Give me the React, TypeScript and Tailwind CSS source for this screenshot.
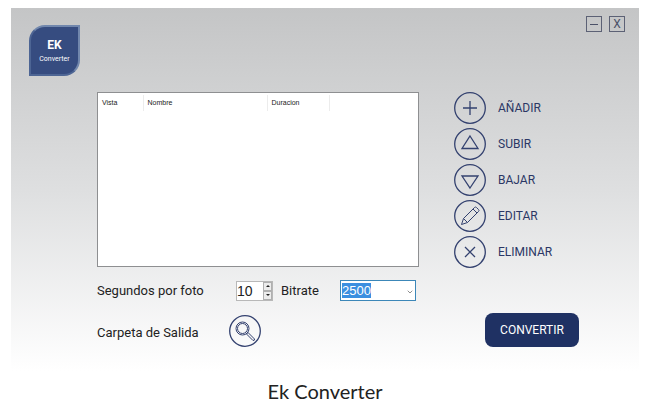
import type { ReactNode } from 'react';
import { ChevronDown } from 'lucide-react';

function AddIcon() {
  return <path d="M16 9v14M9 16h14" />;
}

function UpIcon() {
  return <path d="M16 8 24 20.500H8Z" />;
}

function DownIcon() {
  return <path d="M16 24 24 12H8Z" />;
}

function EditIcon() {
  return (
    <g strokeWidth="1">
      <path d="m7.500 24.500 2-6L20.500 7.500q1-1 2 0l2 2q1 1 0 2L13.500 22.500Z" />
      <path d="m9.500 18.500 4 4M19 9l4 4" />
    </g>
  );
}

function RemoveIcon() {
  return <path d="m11 11 10 10M21 11 11 21" />;
}

function SearchIcon() {
  return (
    <g strokeWidth="1">
      <circle cx="13.500" cy="13.500" r="6.500" />
      <circle cx="13.500" cy="13.500" r="5" />
      <path d="m17.500 19 1.500-1.500 6.500 6.500q.5 1.500-1.500 1.500Z" />
    </g>
  );
}

function CircleIcon({ children }: { children: ReactNode }) {
  return (
    <svg className="size-8 shrink-0" viewBox="0 0 32 32" fill="none" stroke="#33416f" strokeWidth="1.300" aria-hidden="true">
      <circle cx="16" cy="16" r="15.300" />
      {children}
    </svg>
  );
}

const actions = [
  { label: 'AÑADIR', icon: <AddIcon /> },
  { label: 'SUBIR', icon: <UpIcon /> },
  { label: 'BAJAR', icon: <DownIcon /> },
  { label: 'EDITAR', icon: <EditIcon /> },
  { label: 'ELIMINAR', icon: <RemoveIcon /> },
];

export default function App() {
  return (
    <figure className="bg-white pt-2 pr-[31px] pl-[11px] font-['Roboto',sans-serif]">
      <div className="bg-linear-to-b from-[#c4c5c6] via-[#dedfe0] via-50% to-white pb-6">
        {/* Title bar */}
        <header className="flex items-start justify-between pt-2 pr-[14px] pl-[18px]">
          <div className="mt-[9px] flex size-[51px] flex-col items-center justify-center gap-1 rounded-tl-2xl rounded-br-2xl border-2 border-[#7187ad] border-b-[#4d6594] border-l-[#4d6594] bg-[#364c80] text-white">
            <span className="text-xs leading-3 font-bold">EK</span>
            <span className="text-[7px] leading-2">Converter</span>
          </div>
          <div className="flex gap-[7px] text-[#4b5168]">
            <button aria-label="Minimizar" className="flex size-4 items-center justify-center border border-[#5c6175]">
              <span className="h-px w-2 bg-[#4b5168]" />
            </button>
            <button aria-label="Cerrar" className="flex size-4 items-center justify-center border border-[#5c6175] text-xs leading-3">
              X
            </button>
          </div>
        </header>

        {/* File list and actions */}
        <div className="mt-4 flex gap-[35px] pl-[86px]">
          <div className="h-[175px] flex-1 border border-[#8e8f91] bg-white pt-0.5">
            <table className="w-full table-fixed text-left font-['Liberation_Sans',sans-serif] text-[7px] leading-4 text-[#222]">
              <thead>
                <tr>
                  <th className="w-[45px] border-r border-[#ececec] pl-1 font-normal">Vista</th>
                  <th className="w-[124px] border-r border-[#ececec] pl-1 font-normal">Nombre</th>
                  <th className="w-[62px] border-r border-[#ececec] pl-1 font-normal">Duracion</th>
                  <td />
                </tr>
              </thead>
            </table>
          </div>
          <div className="flex w-[185px] flex-col items-start gap-1">
            {actions.map((action) => (
              <button key={action.label} className="flex items-center gap-3 text-xs leading-4 text-[#2b3765]">
                <CircleIcon>{action.icon}</CircleIcon>
                {action.label}
              </button>
            ))}
          </div>
        </div>

        {/* Settings */}
        <div className="mt-3 flex items-end justify-between pr-[60px] pl-[86px] text-[13px] leading-4 text-[#222]">
          <div>
            <div className="flex items-center">
              <label htmlFor="seconds" className="w-[139px]">Segundos por foto</label>
              <div className="flex h-5 w-[37px] border border-[#b8b8b8] bg-white">
                <input
                  id="seconds"
                  type="text"
                  inputMode="numeric"
                  defaultValue="10"
                  className="w-[26px] font-['Liberation_Sans',sans-serif] text-sm leading-4 outline-none"
                />
                <div className="flex flex-1 flex-col">
                  <button aria-label="Más" className="flex flex-1 items-center justify-center border border-[#b0b0b0] bg-[#ececec]">
                    <svg className="h-1 w-1" viewBox="0 0 4 4" aria-hidden="true"><path d="M0 3 2 1l2 2Z" fill="#222" /></svg>
                  </button>
                  <button aria-label="Menos" className="flex flex-1 items-center justify-center border border-[#b0b0b0] bg-[#ececec]">
                    <svg className="h-1 w-1" viewBox="0 0 4 4" aria-hidden="true"><path d="m0 1 2 2 2-2Z" fill="#222" /></svg>
                  </button>
                </div>
              </div>
              <label htmlFor="bitrate" className="ml-2 w-[59px]">Bitrate</label>
              <div className="relative">
                <select
                  id="bitrate"
                  defaultValue="2500"
                  className="block h-[21px] w-[76px] appearance-none border border-[#3c87b8] bg-white bg-[linear-gradient(#3b8fe0,#3b8fe0)] bg-[length:29px_15px] bg-[position:1px_2px] bg-no-repeat pl-px font-['Liberation_Sans',sans-serif] text-[13px] text-white outline-none"
                >
                  <option>2500</option>
                </select>
                <ChevronDown className="pointer-events-none absolute top-2 right-0.5 size-2 text-[#555]" />
              </div>
            </div>
            <div className="mt-[14px] flex items-center">
              <span className="w-[132px] pt-1">Carpeta de Salida</span>
              <button aria-label="Elegir carpeta de salida">
                <CircleIcon><SearchIcon /></CircleIcon>
              </button>
            </div>
          </div>
          <button className="h-[34px] w-[94px] rounded-lg bg-[#1f3163] text-xs leading-4 text-white">CONVERTIR</button>
        </div>
      </div>
      <figcaption className="pt-2 pb-3 text-center font-['Lato',sans-serif] text-xl leading-6 text-[#222]">Ek Converter</figcaption>
    </figure>
  );
}
